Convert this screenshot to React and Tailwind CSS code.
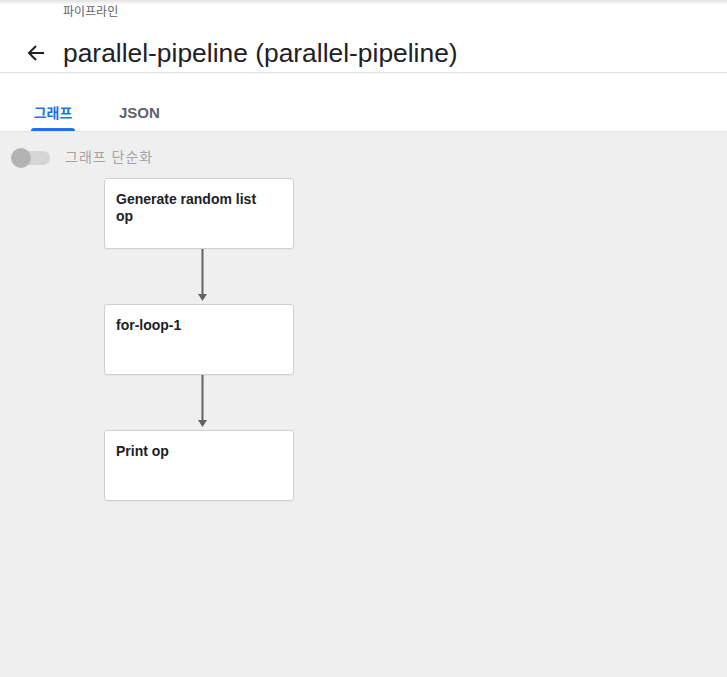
import React from "react";

const nodes = [
  { id: "gen", label: "Generate random list op" },
  { id: "loop", label: "for-loop-1" },
  { id: "print", label: "Print op" },
];

const Edge = ({ h }) => (
  <div className={h === 55 ? "h-[55px] pl-[93px]" : "h-[54px] pl-[93px]"}>
    <svg width="12" height={h} viewBox={`0 0 12 ${h}`}>
      <line x1="5.5" y1="0" x2="5.5" y2={h - 8} stroke="#5f6368" strokeWidth="2" />
      <path d={`M1 ${h - 10} L10 ${h - 10} L5.5 ${h - 3} Z`} fill="#5f6368" />
    </svg>
  </div>
);

const Node = ({ label }) => (
  <div className="w-[190px] h-[71px] bg-white border border-[#d0d0d0] rounded-[3px] px-[11px] pt-[12px] shadow-[0_1px_1px_rgba(0,0,0,0.04)]">
    <div className="w-[150px] text-[14px] leading-[17px] font-bold text-[#202124]">{label}</div>
  </div>
);

const App = () => {
  return (
    <div
      className="h-[677px] w-[727px] flex flex-col bg-white overflow-hidden"
      style={{ fontFamily: '"Liberation Sans", "Noto Sans CJK KR", sans-serif' }}
    >
      <div className="h-[5px] bg-linear-to-b from-[#e2e2e2] to-white" />
      <div className="pl-[63px] text-[12px] leading-[14px] text-[#5f6368]">파이프라인</div>
      <div className="flex items-center pt-[18px] pb-[3px] border-b border-[#e0e0e0]">
        <div className="w-[63px] flex items-center pl-[27px]">
          <svg width="18" height="16" viewBox="0 0 18 16" fill="none">
            <path d="M17 8 H2" stroke="#202124" strokeWidth="2" />
            <path d="M9 1 L2 8 L9 15" stroke="#202124" strokeWidth="2" />
          </svg>
        </div>
        <h1 className="text-[26.4px] leading-[32px] text-[#202124]">parallel-pipeline (parallel-pipeline)</h1>
      </div>
      <div className="flex items-end h-[58px] pl-[31px] gap-[44px]">
        <div className="flex flex-col items-center w-[44px]">
          <span className="text-[14px] leading-[20px] font-bold text-[#1a73e8]">그래프</span>
          <span className="mt-[5px] h-[3px] w-full bg-[#1a73e8] rounded-t-[3px]" />
        </div>
        <div className="flex flex-col items-center">
          <span className="text-[15px] leading-[20px] font-bold text-[#5f6368]">JSON</span>
          <span className="mt-[5px] h-[3px]" />
        </div>
      </div>
      <div className="flex-1 bg-[#efefef] border-t border-[#e4e4e4]">
        <div className="flex items-center pt-[15px] pl-[11px]">
          <div className="relative w-[40px] h-[20px] flex items-center">
            <div className="ml-[2px] w-[37px] h-[14px] rounded-full bg-[#d6d6d6]" />
            <div className="absolute left-0 top-0 w-[20px] h-[20px] rounded-full bg-[#b3b3b3]" />
          </div>
          <span className="ml-[14px] text-[14px] tracking-[1px] text-[#a3a3a3]">그래프 단순화</span>
        </div>
        <div className="pl-[104px] pt-[10px] flex flex-col">
          <Node label={nodes[0].label} />
          <Edge h={55} />
          <Node label={nodes[1].label} />
          <Edge h={55} />
          <Node label={nodes[2].label} />
        </div>
      </div>
    </div>
  );
};

export default App;
